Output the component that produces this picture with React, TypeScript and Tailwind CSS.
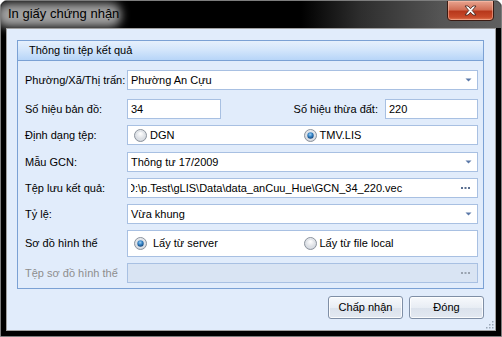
import React from "react";

const font = { fontFamily: '"Liberation Sans", Arial, sans-serif' };

function Arrow() {
  return (
    <svg width="7" height="4" viewBox="0 0 7 4" className="shrink-0">
      <path d="M0.5 0.5 H6.5 L3.5 3.5 Z" fill="#5a78a8" />
    </svg>
  );
}

function Dots({ color = "#5a6f90" }: { color?: string }) {
  return (
    <svg width="9" height="2" viewBox="0 0 9 2" className="shrink-0">
      <rect x="0" y="0" width="2" height="2" fill={color} />
      <rect x="3.5" y="0" width="2" height="2" fill={color} />
      <rect x="7" y="0" width="2" height="2" fill={color} />
    </svg>
  );
}

function Radio({ checked }: { checked?: boolean }) {
  return (
    <svg width="13" height="13" viewBox="0 0 13 13" className="shrink-0">
      <defs>
        <radialGradient id="rg" cx="50%" cy="35%" r="65%">
          <stop offset="0" stopColor="#ffffff" />
          <stop offset="1" stopColor="#c9ced6" />
        </radialGradient>
        <radialGradient id="rb" cx="45%" cy="35%" r="60%">
          <stop offset="0" stopColor="#9fd1f5" />
          <stop offset="0.6" stopColor="#2f7dc0" />
          <stop offset="1" stopColor="#1a4f86" />
        </radialGradient>
      </defs>
      <circle cx="6.5" cy="6.5" r="6" fill="url(#rg)" stroke="#8c939d" strokeWidth="1" />
      <circle cx="6.5" cy="6.5" r="4.3" fill="none" stroke="#dfe3e8" strokeWidth="1" />
      {checked && <circle cx="6.5" cy="6.5" r="3.2" fill="url(#rb)" />}
    </svg>
  );
}

function Combo({ value }: { value: string }) {
  return (
    <div className="w-[351px] h-[20px] bg-white border border-[#a8c0e2] flex items-center pl-[3px] pr-[5px]">
      <span className="flex-1 text-[11px] text-black leading-none">{value}</span>
      <Arrow />
    </div>
  );
}

export default function App() {
  return (
    <div
      className="w-[502px] h-[337px] bg-black border border-[#7d7d7d] rounded-t-[7px] flex flex-col overflow-hidden"
      style={font}
    >
      {/* title bar */}
      <div className="h-[27px] relative flex items-start bg-[linear-gradient(to_right,#000_0%,#000_60%,#2e2e2e_72%,#555_88%,#5f5f5f_100%)]">
        <div className="absolute left-[-4px] top-[2px] w-[124px] h-[24px] rounded-[10px] bg-[#c9c9c9] blur-[5px] opacity-80" />
        <span className="relative ml-[7px] mt-[6px] text-[13px] leading-none text-black">
          In giấy chứng nhận
        </span>
        <div className="absolute right-[7px] top-[-1px] w-[47px] h-[21px] rounded-b-[4px] border border-[#3a1a12] bg-[linear-gradient(to_bottom,#e8a48f_0%,#d27057_45%,#b8381c_55%,#c84a2a_85%,#e07a55_100%)] flex items-center justify-center shadow-[inset_0_0_0_1px_rgba(255,200,180,0.5)]">
          <svg width="13" height="11" viewBox="0 0 13 11">
            <path
              d="M1 1 L4 1 L6.5 3.7 L9 1 L12 1 L8.2 5.5 L12 10 L9 10 L6.5 7.3 L4 10 L1 10 L4.8 5.5 Z"
              fill="#ffffff"
              stroke="#4a2a24"
              strokeWidth="0.9"
            />
          </svg>
        </div>
      </div>

      {/* client area */}
      <div className="flex-1 mx-[5px] mb-[5px] border border-[#a0a0a0] bg-[#e1ecfb] flex flex-col relative">
        {/* group box */}
        <div className="ml-[10px] mt-[11px] w-[467px] h-[249px] border border-[#7ba1d4] flex flex-col">
          <div className="h-[20px] border-b border-[#7ba1d4] bg-[linear-gradient(to_bottom,#e6f0fc_0%,#d2e5fb_50%,#b7d5f8_100%)] flex items-center pl-[11px]">
            <span className="text-[11px] leading-none text-black">Thông tin tệp kết quả</span>
          </div>

          <div className="flex flex-col pl-[7px] text-[11px] text-black">
            {/* row 1 */}
            <div className="mt-[9px] h-[20px] flex items-center">
              <span className="w-[102px] leading-none">Phường/Xã/Thị trấn:</span>
              <Combo value="Phường An Cựu" />
            </div>
            {/* row 2 */}
            <div className="mt-[9px] h-[20px] flex items-center">
              <span className="w-[102px] leading-none">Số hiệu bản đồ:</span>
              <div className="w-[94px] h-[20px] bg-white border border-[#a8c0e2] flex items-center pl-[3px]">
                <span className="leading-none">34</span>
              </div>
              <span className="w-[164px] text-right pr-[7px] leading-none">Số hiệu thừa đất:</span>
              <div className="w-[93px] h-[20px] bg-white border border-[#a8c0e2] flex items-center pl-[3px]">
                <span className="leading-none">220</span>
              </div>
            </div>
            {/* row 3 */}
            <div className="mt-[6px] h-[20px] flex items-center">
              <span className="w-[102px] leading-none">Định dạng tệp:</span>
              <div className="w-[351px] h-[20px] bg-white border border-[#a8c0e2] grid grid-cols-2 items-center">
                <div className="flex items-center gap-[3px] pl-[6px]">
                  <Radio />
                  <span className="leading-none">DGN</span>
                </div>
                <div className="flex items-center gap-[3px] pl-[1px]">
                  <Radio checked />
                  <span className="leading-none">TMV.LIS</span>
                </div>
              </div>
            </div>
            {/* row 4 */}
            <div className="mt-[7px] h-[20px] flex items-center">
              <span className="w-[102px] leading-none">Mẫu GCN:</span>
              <Combo value="Thông tư 17/2009" />
            </div>
            {/* row 5 */}
            <div className="mt-[6px] h-[20px] flex items-center">
              <span className="w-[102px] leading-none">Tệp lưu kết quả:</span>
              <div className="w-[351px] h-[20px] bg-white border border-[#a8c0e2] flex items-center pl-[3px] pr-[7px]">
                <div className="flex-1 overflow-hidden whitespace-nowrap">
                  <span className="block ml-[-4px] leading-none">
                    D:\p.Test\gLIS\Data\data_anCuu_Hue\GCN_34_220.vec
                  </span>
                </div>
                <Dots />
              </div>
            </div>
            {/* row 6 */}
            <div className="mt-[6px] h-[20px] flex items-center">
              <span className="w-[102px] leading-none">Tỷ lệ:</span>
              <Combo value="Vừa khung" />
            </div>
            {/* row 7 */}
            <div className="mt-[6px] h-[27px] flex items-center">
              <span className="w-[102px] leading-none">Sơ đồ hình thể</span>
              <div className="w-[351px] h-[27px] bg-white border border-[#a8c0e2] grid grid-cols-2 items-center">
                <div className="flex items-center gap-[6px] pl-[6px]">
                  <Radio checked />
                  <span className="leading-none">Lấy từ server</span>
                </div>
                <div className="flex items-center gap-[3px] pl-[1px]">
                  <Radio />
                  <span className="leading-none">Lấy từ file local</span>
                </div>
              </div>
            </div>
            {/* row 8 */}
            <div className="mt-[6px] h-[20px] flex items-center">
              <span className="w-[102px] leading-none text-[#8e8e8e]">Tệp sơ đồ hình thể</span>
              <div className="w-[351px] h-[20px] bg-[#d9e4f3] border border-[#a8c0e2] flex items-center justify-end pr-[7px]">
                <Dots color="#9aa3b0" />
              </div>
            </div>
          </div>
        </div>

        {/* buttons */}
        <div className="mt-[7px] flex justify-end gap-[6px] mr-[11px]">
          {["Chấp nhận", "Đóng"].map((t) => (
            <button
              key={t}
              className="w-[75px] h-[23px] rounded-[3px] border border-[#7f8fa6] bg-[linear-gradient(to_bottom,#f7f9fc_0%,#e8edf4_50%,#dbe2ec_51%,#e3e9f1_100%)] shadow-[inset_0_0_0_1px_rgba(255,255,255,0.8)] text-[11px] text-black leading-none flex items-center justify-center"
            >
              {t}
            </button>
          ))}
        </div>

        {/* resize grip */}
        <svg width="8" height="8" viewBox="0 0 8 8" className="absolute right-[1px] bottom-[1px]">
          <rect x="6" y="0" width="1.5" height="1.5" fill="#9aa7b8" />
          <rect x="3" y="3" width="1.5" height="1.5" fill="#9aa7b8" />
          <rect x="6" y="3" width="1.5" height="1.5" fill="#9aa7b8" />
          <rect x="0" y="6" width="1.5" height="1.5" fill="#9aa7b8" />
          <rect x="3" y="6" width="1.5" height="1.5" fill="#9aa7b8" />
          <rect x="6" y="6" width="1.5" height="1.5" fill="#9aa7b8" />
        </svg>
      </div>
    </div>
  );
}
